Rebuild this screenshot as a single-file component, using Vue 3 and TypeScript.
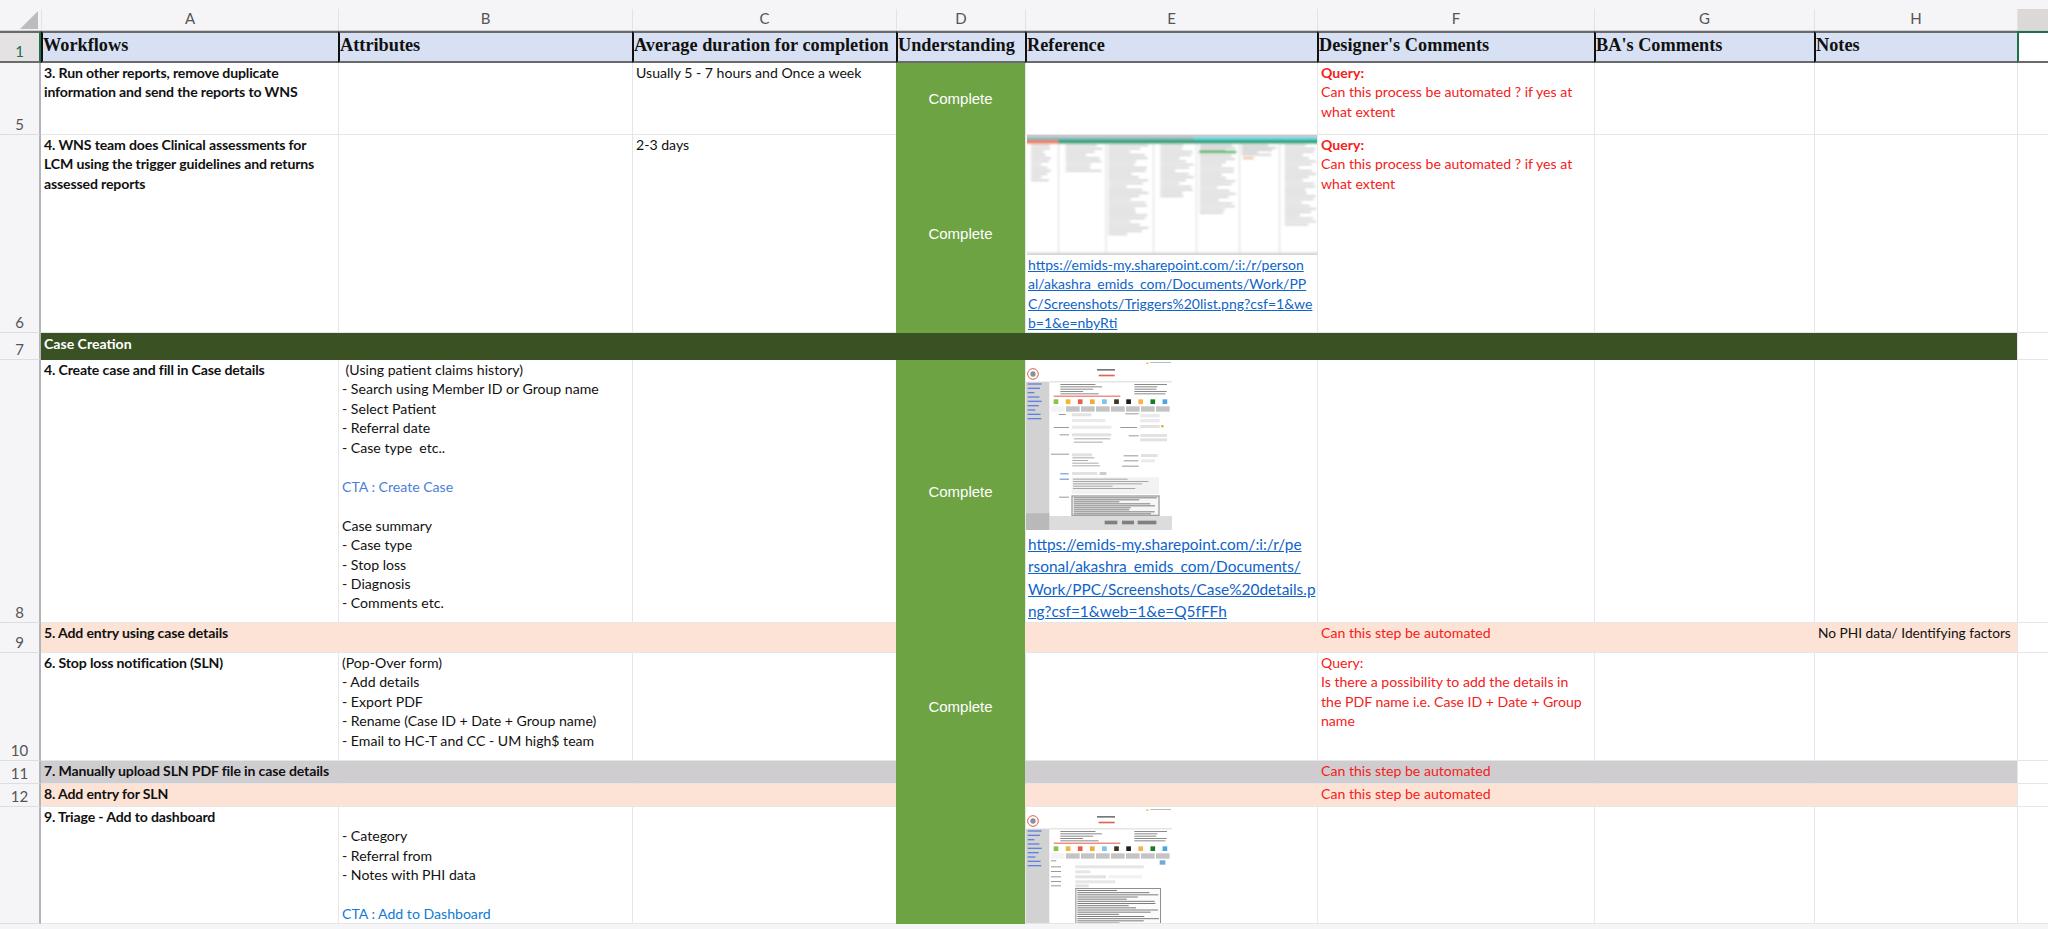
<template>
  <div class="sheet">
    <!-- column letters -->
    <div class="row col-head">
      <div class="corner">
        <svg width="18" height="18" viewBox="0 0 18 18"><path d="M18 0V18H0Z" fill="#bcbcbc" /></svg>
      </div>
      <div v-for="c in columnLetters" :key="c" class="letter">{{ c }}</div>
      <div class="letter picked"></div>
    </div>

    <!-- frozen title row -->
    <div class="row title-row">
      <div class="num num-active">1</div>
      <div v-for="t in titles" :key="t" class="title">{{ t }}</div>
      <div class="title-end"></div>
    </div>

    <!-- body -->
    <div
      v-for="r in rows"
      :key="r.num"
      class="row"
      :class="r.tone"
      :style="{ height: r.height + 'px' }"
    >
      
      <div class="num">{{ r.thumb === 'triage' ? '' : r.num }}</div>
      <template v-if="r.tone === 'section'">
        <div class="section-label">{{ r.a }}</div>
      </template>
      <template v-else>
        <div class="cell strong">{{ r.a }}</div>
        <div class="cell">
          <div v-for="(l, i) in r.b" :key="i" class="line" :class="l.cls">{{ l.t }}</div>
        </div>
        <div class="cell">{{ r.c }}</div>
        <div class="status">{{ r.done ? 'Complete' : '' }}</div>
        <div class="cell ref">
          <svg v-if="r.thumb === 'triggers'" class="thumb" width="290" height="120" viewBox="12 15 870 360">
            <defs><filter id="soft1"><feGaussianBlur stdDeviation="2.6" /></filter></defs>
            <g filter="url(#soft1)">
              <rect v-for="(s, i) in triggerShapes" :key="i" :x="s.x" :y="s.y" :width="s.w" :height="s.h" :fill="s.fill" />
            </g>
          </svg>
          <svg v-if="r.thumb === 'case'" class="thumb-case" width="146" height="170" viewBox="47 30 438 510">
            <defs><filter id="soft2"><feGaussianBlur stdDeviation="2" /></filter></defs>
            <g filter="url(#soft2)">
              <rect v-for="(s, i) in caseShapes" :key="i" :x="s.x" :y="s.y" :width="s.w" :height="s.h" :fill="s.fill" />
              <circle cx="68" cy="72" r="16" fill="#fff" stroke="#d9604f" stroke-width="3" />
              <circle cx="68" cy="72" r="8" fill="#8a8f99" />
            </g>
          </svg>
          <svg v-if="r.thumb === 'triage'" class="thumb-case" width="146" height="117" viewBox="47 30 438 351">
            <defs><filter id="soft3"><feGaussianBlur stdDeviation="2" /></filter></defs>
            <g filter="url(#soft3)">
              <rect v-for="(s, i) in triageShapes" :key="i" :x="s.x" :y="s.y" :width="s.w" :height="s.h" :fill="s.fill" />
              <circle cx="68" cy="72" r="16" fill="#fff" stroke="#d9604f" stroke-width="3" />
              <circle cx="68" cy="72" r="8" fill="#8a8f99" />
            </g>
          </svg>
          <div v-if="r.link" class="link-block" :class="r.linkSize">
            <div v-for="l in r.link" :key="l"><a href="#" @click.prevent>{{ l }}</a></div>
          </div>
        </div>
        <div class="cell">
          <div v-for="(l, i) in r.f" :key="i" class="line red" :class="l.cls">{{ l.t }}</div>
        </div>
        <div class="cell"></div>
        <div class="cell note">{{ r.note }}</div>
      </template>
      <div class="spare"></div>
    </div>

    <div class="foot"></div>
  </div>
</template>

<script setup lang="ts">
interface Line { t: string; cls?: string }
interface Shape { x: number; y: number; w: number; h: number; fill: string }
interface Row {
  num: number
  height: number
  tone?: 'peach' | 'grey' | 'section'
  a: string
  b?: Line[]
  c?: string
  done?: boolean
  thumb?: 'triggers' | 'case' | 'triage'
  link?: string[]
  linkSize?: string
  f?: Line[]
  note?: string
}

const columnLetters = ['A', 'B', 'C', 'D', 'E', 'F', 'G', 'H']
const titles = [
  'Workflows',
  'Attributes',
  'Average duration for completion',
  'Understanding',
  'Reference',
  "Designer's Comments",
  "BA's Comments",
  'Notes'
]

const text = (...items: string[]): Line[] => items.map(t => ({ t }))
const query = (...items: string[]): Line[] => [
  { t: 'Query:', cls: 'bold' },
  ...text(...items)
]

const rows: Row[] = [
  {
    num: 5,
    height: 72,
    a: '3. Run other reports, remove duplicate\ninformation and send the reports to WNS',
    c: 'Usually 5 - 7 hours and Once a week',
    done: true,
    f: query('Can this process be automated ? if yes at', 'what extent')
  },
  {
    num: 6,
    height: 198,
    a: '4. WNS team does Clinical assessments for\nLCM using the trigger guidelines and returns\nassessed reports',
    c: '2-3 days',
    done: true,
    thumb: 'triggers',
    link: [
      'https://emids-my.sharepoint.com/:i:/r/person',
      'al/akashra_emids_com/Documents/Work/PP',
      'C/Screenshots/Triggers%20list.png?csf=1&we',
      'b=1&e=nbyRti'
    ],
    f: query('Can this process be automated ? if yes at', 'what extent')
  },
  { num: 7, height: 27, tone: 'section', a: 'Case Creation' },
  {
    num: 8,
    height: 263,
    a: '4. Create case and fill in Case details',
    b: [
      ...text(
        ' (Using patient claims history)',
        '- Search using Member ID or Group name',
        '- Select Patient',
        '- Referral date',
        '- Case type  etc..',
        ' '
      ),
      { t: 'CTA : Create Case', cls: 'cta' },
      ...text(' ', 'Case summary', '- Case type', '- Stop loss', '- Diagnosis', '- Comments etc.')
    ],
    done: true,
    thumb: 'case',
    link: [
      'https://emids-my.sharepoint.com/:i:/r/pe',
      'rsonal/akashra_emids_com/Documents/',
      'Work/PPC/Screenshots/Case%20details.p',
      'ng?csf=1&web=1&e=Q5fFFh'
    ],
    linkSize: 'large',
    f: []
  },
  {
    num: 9,
    height: 30,
    tone: 'peach',
    a: '5. Add entry using case details',
    f: text('Can this step be automated'),
    note: 'No PHI data/ Identifying factors'
  },
  {
    num: 10,
    height: 108,
    a: '6. Stop loss notification (SLN)',
    b: text(
      '(Pop-Over form)',
      '- Add details',
      '- Export PDF',
      '- Rename (Case ID + Date + Group name)',
      '- Email to HC-T and CC - UM high$ team'
    ),
    done: true,
    f: text(
      'Query:',
      'Is there a possibility to add the details in',
      'the PDF name i.e. Case ID + Date + Group',
      'name'
    )
  },
  {
    num: 11,
    height: 23,
    tone: 'grey',
    a: '7. Manually upload SLN PDF file in case details',
    f: text('Can this step be automated')
  },
  {
    num: 12,
    height: 23,
    tone: 'peach',
    a: '8. Add entry for SLN',
    f: text('Can this step be automated')
  },
  {
    num: 13,
    height: 117,
    a: '9. Triage - Add to dashboard',
    b: [
      ...text(' ', '- Category', '- Referral from', '- Notes with PHI data', ' '),
      { t: 'CTA : Add to Dashboard', cls: 'cta2' }
    ],
    thumb: 'triage'
  }
]

// thumbnails are only blurred previews, so grey bars stand in for their small print
function bars(x: number, top: number, bottom: number, width: number, gap: number, fill = '#a6a6a6'): Shape[] {
  const out: Shape[] = []
  let i = 0
  for (let y = top; y < bottom; y += gap) {
    const len = width * (0.45 + 0.55 * Math.abs(Math.sin(i * 2.3 + x)))
    out.push({ x, y, w: len, h: 3, fill })
    i++
  }
  return out
}

const triggerShapes: Shape[] = [
  { x: 0, y: 0, w: 900, h: 400, fill: '#ffffff' },
  { x: 0, y: 0, w: 900, h: 23, fill: '#c9c9c9' },
  { x: 0, y: 23, w: 515, h: 8, fill: '#6fb0b8' },
  { x: 515, y: 23, w: 385, h: 8, fill: '#3fd4e0' },
  { x: 0, y: 31, w: 105, h: 10, fill: '#f0704e' },
  { x: 105, y: 31, w: 795, h: 10, fill: '#159a68' },
  ...[105, 248, 390, 520, 648, 768].map(x => ({ x, y: 40, w: 2, h: 328, fill: '#c4c4c4' })),
  { x: 0, y: 368, w: 900, h: 30, fill: '#d2d2d2' },
  ...bars(24, 45, 155, 60, 9.5),
  ...bars(128, 45, 122, 110, 9.5),
  ...bars(256, 45, 318, 120, 9.5),
  ...bars(412, 45, 205, 100, 9.5),
  { x: 528, y: 62, w: 112, h: 8, fill: '#35b34a' },
  ...bars(530, 45, 60, 108, 7),
  ...bars(530, 76, 252, 108, 9.5),
  ...bars(656, 45, 78, 105, 7),
  { x: 660, y: 83, w: 32, h: 4, fill: '#e08a2c' },
  ...bars(785, 45, 285, 95, 9.5)
]

const iconColors = ['#8bc34a', '#f5b52e', '#ef5a45', '#f7a83b', '#7cc4ec', '#3b3420', '#1d1d1d', '#f9b04a', '#1f7a2f', '#4aa6e0']

// top of the case screen, the same in both captures
const caseTop: Shape[] = [
  { x: 30, y: 10, w: 470, h: 550, fill: '#ffffff' },
  { x: 30, y: 95, w: 87, h: 465, fill: '#d2d2d2' },
  { x: 117, y: 94, w: 368, h: 3, fill: '#d8d8d8' },
  { x: 408, y: 37, w: 6, h: 5, fill: '#f1c232' },
  { x: 420, y: 36, w: 62, h: 3, fill: '#bbbbbb' },
  { x: 260, y: 57, w: 54, h: 5, fill: '#777777' },
  { x: 265, y: 74, w: 48, h: 5, fill: '#e0645a' },
  ...bars(52, 100, 215, 42, 13, '#5f82e0').map(s => ({ ...s, h: 4 })),
  ...bars(150, 102, 132, 125, 7, '#8a8a8a'),
  ...bars(372, 102, 132, 100, 7, '#8a8a8a'),
  { x: 130, y: 137, w: 200, h: 3, fill: '#e05a4e' },
  ...iconColors.map((fill, i) => ({ x: 130 + i * 36.3, y: 148, w: 14, h: 14, fill })),
  ...Array.from({ length: 8 }, (_, i) => ({ x: 122 + i * 45, y: 169, w: 41, h: 16, fill: i === 0 ? '#f4f4f4' : '#c4c4c4' }))
]

const caseShapes: Shape[] = [
  ...caseTop,
  ...bars(145, 192, 200, 30, 9, '#999999'),
  { x: 185, y: 190, w: 58, h: 9, fill: '#e2e2e2' },
  { x: 345, y: 190, w: 40, h: 3, fill: '#999999' },
  { x: 390, y: 192, w: 58, h: 10, fill: '#eaeaea' },
  { x: 185, y: 207, w: 100, h: 9, fill: '#eaeaea' },
  { x: 390, y: 207, w: 58, h: 10, fill: '#eaeaea' },
  { x: 185, y: 227, w: 118, h: 9, fill: '#eaeaea' },
  { x: 130, y: 231, w: 46, h: 3, fill: '#999999' },
  { x: 330, y: 231, w: 50, h: 3, fill: '#999999' },
  { x: 390, y: 225, w: 58, h: 9, fill: '#e2e2e2' },
  { x: 452, y: 225, w: 8, h: 7, fill: '#e8b04a' },
  { x: 148, y: 253, w: 28, h: 3, fill: '#999999' },
  { x: 185, y: 250, w: 118, h: 9, fill: '#e2e2e2' },
  { x: 355, y: 256, w: 30, h: 3, fill: '#999999' },
  { x: 390, y: 252, w: 80, h: 9, fill: '#e2e2e2' },
  { x: 390, y: 265, w: 80, h: 9, fill: '#e2e2e2' },
  ...bars(190, 265, 285, 110, 10, '#aaaaaa'),
  { x: 122, y: 311, w: 54, h: 3, fill: '#999999' },
  { x: 185, y: 310, w: 60, h: 9, fill: '#e2e2e2' },
  ...bars(186, 322, 352, 85, 8, '#aaaaaa'),
  { x: 340, y: 316, w: 44, h: 3, fill: '#999999' },
  { x: 392, y: 312, w: 50, h: 9, fill: '#e2e2e2' },
  { x: 340, y: 331, w: 44, h: 3, fill: '#999999' },
  { x: 392, y: 328, w: 42, h: 9, fill: '#eaeaea' },
  { x: 335, y: 347, w: 50, h: 3, fill: '#999999' },
  { x: 150, y: 370, w: 25, h: 3, fill: '#5f82e0' },
  { x: 185, y: 366, w: 76, h: 9, fill: '#e2e2e2' },
  { x: 268, y: 366, w: 20, h: 9, fill: '#cccccc' },
  { x: 148, y: 386, w: 28, h: 3, fill: '#5f82e0' },
  { x: 184, y: 382, w: 262, h: 50, fill: '#f2f2f2' },
  ...bars(188, 386, 420, 230, 7, '#a6a6a6'),
  { x: 146, y: 440, w: 30, h: 3, fill: '#999999' },
  { x: 183, y: 436, w: 265, h: 62, fill: '#a0a0a0' },
  { x: 187, y: 440, w: 257, h: 54, fill: '#f6f6f6' },
  ...bars(190, 442, 492, 250, 6, '#7c7c7c'),
  { x: 117, y: 498, w: 380, h: 60, fill: '#dcdcdc' },
  { x: 30, y: 490, w: 87, h: 70, fill: '#b9b9b9' },
  { x: 283, y: 512, w: 38, h: 11, fill: '#808080' },
  { x: 335, y: 512, w: 36, h: 11, fill: '#808080' },
  { x: 382, y: 512, w: 56, h: 11, fill: '#808080' }
]

const triageShapes: Shape[] = [
  ...caseTop,
  { x: 448, y: 190, w: 17, h: 13, fill: '#6fa8d8' },
  { x: 122, y: 190, w: 16, h: 3, fill: '#999999' },
  ...[208, 222, 238, 252, 265].map(y => ({ x: 122, y, w: 30, h: 3, fill: '#999999' })),
  { x: 195, y: 205, w: 205, h: 9, fill: '#e6e6e6' },
  { x: 195, y: 220, w: 45, h: 9, fill: '#e6e6e6' },
  { x: 195, y: 235, w: 92, h: 9, fill: '#e2e2e2' },
  { x: 295, y: 235, w: 100, h: 9, fill: '#f2f2f2' },
  { x: 195, y: 250, w: 120, h: 9, fill: '#e6e6e6' },
  { x: 195, y: 262, w: 40, h: 9, fill: '#e2e2e2' },
  { x: 195, y: 273, w: 257, h: 120, fill: '#8f8f8f' },
  { x: 198, y: 276, w: 251, h: 120, fill: '#fbfbfb' },
  ...bars(201, 279, 395, 245, 6.5, '#7c7c7c')
]
</script>

<style scoped>
.sheet {
  width: 2048px;
  height: 929px;
  overflow: hidden;
  display: flex;
  flex-direction: column;
  background: #fff;
  font-family: Lato, "Liberation Sans", sans-serif;
  font-size: 14.1px;
  line-height: 19.45px;
  color: #111;
}
.row {
  display: grid;
  grid-template-columns: 41px 297px 294px 264px 129px 292px 277px 220px 203px 31px;
  flex: none;
}
.col-head {
  height: 31px;
  padding-top: 9px;
  box-sizing: border-box;
  background: #f5f4f7;
  border-bottom: 1px solid #cfcfd2;
}
.corner {
  display: flex;
  justify-content: flex-end;
  padding: 2px 3px 0 0;
}
.letter {
  text-align: center;
  font-size: 15px;
  line-height: 19px;
  color: #555;
  border-left: 1px solid #e3e3e5;
}
.letter.picked {
  background: #dcd8d8;
}
.title-row {
  height: 32px;
  background: #fff;
}
.title {
  box-sizing: border-box;
  background: #d8e1f3;
  border-top: 2px solid #6a6a6a;
  border-bottom: 2px solid #6a6a6a;
  border-left: 2px solid #111;
  padding: 0;
  font-family: "Liberation Serif", serif;
  font-weight: 700;
  font-size: 18.3px;
  line-height: 24px;
  color: #111;
  white-space: nowrap;
  overflow: hidden;
}
.title:first-of-type {
  border-left: 2px solid #1f6f4a;
}
.title-end {
  box-sizing: border-box;
  border: 2px solid #1f6f4a;
  border-right: none;
  border-bottom-color: #6a6a6a;
}
.num {
  display: flex;
  align-items: flex-end;
  justify-content: center;
  box-sizing: border-box;
  background: #f5f4f7;
  border-right: 2px solid #b4b4b8;
  border-bottom: 1px solid #dedee0;
  font-size: 15px;
  line-height: 19px;
  color: #555;
}
.num-active {
  background: #e4e2e2;
  color: #1f6f4a;
  border-right-color: #1f6f4a;
  border-top: 2px solid #6a6a6a;
  border-bottom: 2px solid #6a6a6a;
}
.cell {
  box-sizing: border-box;
  min-width: 0;
  padding-left: 3px;
  border-left: 1px solid #e6e6e8;
  border-bottom: 1px solid #e6e6e8;
  white-space: pre;
  overflow: hidden;
}
.strong {
  font-weight: 700;
  letter-spacing: -0.15px;
  border-left: none;
  overflow: visible;
  position: relative;
}
.note {
  font-size: 13.7px;
}
.line {
  min-height: 19.45px;
}
.bold {
  font-weight: 700;
}
.cta {
  color: #4a7fd8;
}
.cta2 {
  color: #1279d6;
}
.red {
  color: #f5201a;
}
.status {
  display: flex;
  align-items: center;
  justify-content: center;
  background: #6ea344;
  color: #fff;
  font-family: "Liberation Sans", sans-serif;
  font-size: 15px;
}
.ref {
  padding-left: 0;
}
.thumb {
  display: block;
  margin-left: 1px;
}
.thumb-case {
  display: block;
}
.link-block {
  padding-left: 2px;
  font-size: 14px;
}
.link-block a {
  color: #0f63c9;
}
.link-block.large {
  padding-top: 3px;
  font-size: 15.4px;
  line-height: 22.4px;
}
.section .num {
  border-bottom: 1px solid #dedee0;
}
.section-label {
  grid-column: 2 / span 8;
  padding: 1px 0 0 3px;
  background: #3a5124;
  color: #fff;
  font-weight: 700;
}
.spare {
  border-left: 1px solid #e6e6e8;
  border-bottom: 1px solid #e6e6e8;
}
.peach .cell {
  background: #fde3d6;
  border-left-color: transparent;
}
.grey .cell {
  background: #d0cdd1;
  border-left-color: transparent;
}
.foot {
  flex: 1;
  background: #f5f4f7;
}
</style>
